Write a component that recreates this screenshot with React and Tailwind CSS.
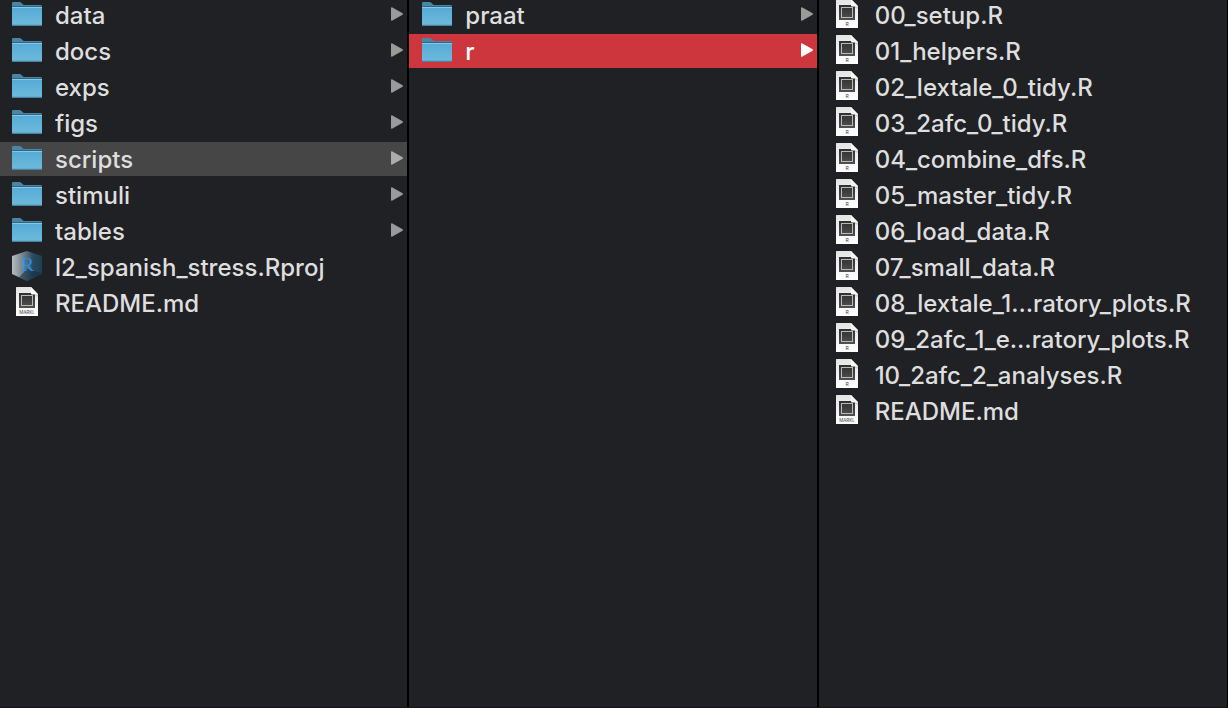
import React from "react";

const projectItems = [
  { name: "data", kind: "folder" },
  { name: "docs", kind: "folder" },
  { name: "exps", kind: "folder" },
  { name: "figs", kind: "folder" },
  { name: "scripts", kind: "folder", state: "open" },
  { name: "stimuli", kind: "folder" },
  { name: "tables", kind: "folder" },
  { name: "l2_spanish_stress.Rproj", kind: "project" },
  { name: "README.md", kind: "file", label: "MARKL" },
];

const scriptItems = [
  { name: "praat", kind: "folder" },
  { name: "r", kind: "folder", state: "active" },
];

const rItems = [
  "00_setup.R",
  "01_helpers.R",
  "02_lextale_0_tidy.R",
  "03_2afc_0_tidy.R",
  "04_combine_dfs.R",
  "05_master_tidy.R",
  "06_load_data.R",
  "07_small_data.R",
  "08_lextale_1…ratory_plots.R",
  "09_2afc_1_e…ratory_plots.R",
  "10_2afc_2_analyses.R",
]
  .map((name) => ({ name, kind: "file", label: "R" }))
  .concat({ name: "README.md", kind: "file", label: "MARKL" });

function Gradients() {
  return (
    <svg className="absolute h-0 w-0" aria-hidden="true">
      <defs>
        <linearGradient id="folderFront" x1="0" y1="0" x2="0" y2="1">
          <stop offset="0" stopColor="#55abd5" />
          <stop offset="0.6" stopColor="#64b4da" />
          <stop offset="1" stopColor="#6fbadb" />
        </linearGradient>
        <linearGradient id="page" x1="0" y1="0" x2="0" y2="1">
          <stop offset="0" stopColor="#e4e4e4" />
          <stop offset="1" stopColor="#ffffff" />
        </linearGradient>
        <linearGradient id="chip" x1="0" y1="0" x2="0" y2="1">
          <stop offset="0" stopColor="#303030" />
          <stop offset="1" stopColor="#505050" />
        </linearGradient>
        <linearGradient id="hexLeft" x1="0" y1="0" x2="1" y2="0">
          <stop offset="0" stopColor="#b4bdc0" />
          <stop offset="0.35" stopColor="#74858e" />
          <stop offset="0.7" stopColor="#2b4a5f" />
          <stop offset="1" stopColor="#1f3f55" />
        </linearGradient>
      </defs>
    </svg>
  );
}

function FolderIcon() {
  return (
    <svg width="30" height="24" viewBox="0 0 30 24" aria-hidden="true">
      <path d="M0 1.2Q0 0 1.2 0H7.6Q8.6 0 9.3.8L11 2.6Q11.4 3 12 3H28.8Q30 3 30 4.2V10H0Z" fill="#4587a6" />
      <rect y="4" width="30" height="1.5" fill="#37647c" />
      <path d="M0 5H30V22.6Q30 24 28.6 24H1.4Q0 24 0 22.6Z" fill="url(#folderFront)" />
      <rect y="5" width="30" height="1" fill="#83c9e9" />
      <path d="M0 22.8H30Q30 24 28.8 24H1.2Q0 24 0 22.8Z" fill="#4684a3" />
    </svg>
  );
}

function FileIcon({ label }) {
  return (
    <svg className="mb-px" width="22" height="29" viewBox="0 0 22 29" aria-hidden="true">
      <path d="M.5 0H15L22 7V28.5Q22 29 21.5 29H.5Q0 29 0 28.5V.5Q0 0 .5 0Z" fill="url(#page)" />
      <path d="M15 7L22 7.5V10Z" fill="#cfcfcf" />
      <rect x="3" y="6" width="16" height="15" fill="url(#chip)" />
      <path d="M15 0L22 7.4H16Q15 7.4 15 6.4Z" fill="#fafafa" />
      <rect x="5.5" y="8.5" width="11" height="10" fill="none" stroke="#b9b9b9" strokeWidth="1" />
      <text
        x="11"
        y="26.5"
        textAnchor="middle"
        fontFamily="Inter, sans-serif"
        fontSize={label === "R" ? 5 : 4.5}
        fontWeight="400"
        fill="#444444"
      >
        {label}
      </text>
    </svg>
  );
}

function ProjectIcon() {
  return (
    <svg width="32" height="30" viewBox="0 0 32 30" aria-hidden="true">
      <path d="M16 0L31 5V23L16 30L1 23V5Z" fill="url(#hexLeft)" />
      <path d="M16 18L31 22V23L16 30L8 26.3Z" fill="#102b40" opacity="0.55" />
      <text x="16.5" y="20" textAnchor="middle" fontFamily="Liberation Serif, serif" fontSize="19" fill="#2590e6">
        R
      </text>
    </svg>
  );
}

function Arrow() {
  return (
    <svg className="mb-0.5 shrink-0" width="12" height="14" viewBox="0 0 12 14" aria-hidden="true">
      <path d="M0 1.2Q0-.4 1.4.4L11.2 6Q12.8 7 11.2 8L1.4 13.6Q0 14.4 0 12.8Z" fill="currentColor" />
    </svg>
  );
}

function Row({ item }) {
  const tone =
    item.state === "active"
      ? "bg-[#cd363d] text-white"
      : item.state === "open"
        ? "bg-[#464646] text-[#dedede]"
        : "text-[#dedede]";
  const arrowTone = item.state === "active" ? "text-white" : item.state === "open" ? "text-[#acacac]" : "text-[#9a9a9b]";
  return (
    <li>
      <button type="button" className={`flex h-[34px] w-full items-center gap-3 pr-1 text-left ${tone}`}>
        <span className="mb-0.5 flex w-8 shrink-0 justify-center">
          {item.kind === "folder" && <FolderIcon />}
          {item.kind === "file" && <FileIcon label={item.label} />}
          {item.kind === "project" && <ProjectIcon />}
        </span>
        <span className="min-w-0 flex-1 truncate pt-0.5">{item.name}</span>
        {item.kind === "folder" && (
          <span className={arrowTone}>
            <Arrow />
          </span>
        )}
      </button>
    </li>
  );
}

function Column({ label, items, className }) {
  return (
    <section aria-label={label} className={`min-w-0 overflow-hidden border-black ${className}`}>
      <ul className="-mt-0.5 flex flex-col gap-0.5">
        {items.map((item) => (
          <Row key={item.name} item={item} />
        ))}
      </ul>
    </section>
  );
}

export default function App() {
  return (
    <main className="grid min-h-screen grid-cols-3 border-b border-[#17131a] bg-[#202125] font-['Inter',sans-serif] text-2xl leading-8 font-[450]">
      <Gradients />
      <Column label="Project" items={projectItems} className="border-r-2 [&_button]:pl-[11px]" />
      <Column label="scripts" items={scriptItems} className="border-r-2 [&_button]:pl-3" />
      <Column label="r" items={rItems} className="border-r [&_button]:pl-3" />
    </main>
  );
}
